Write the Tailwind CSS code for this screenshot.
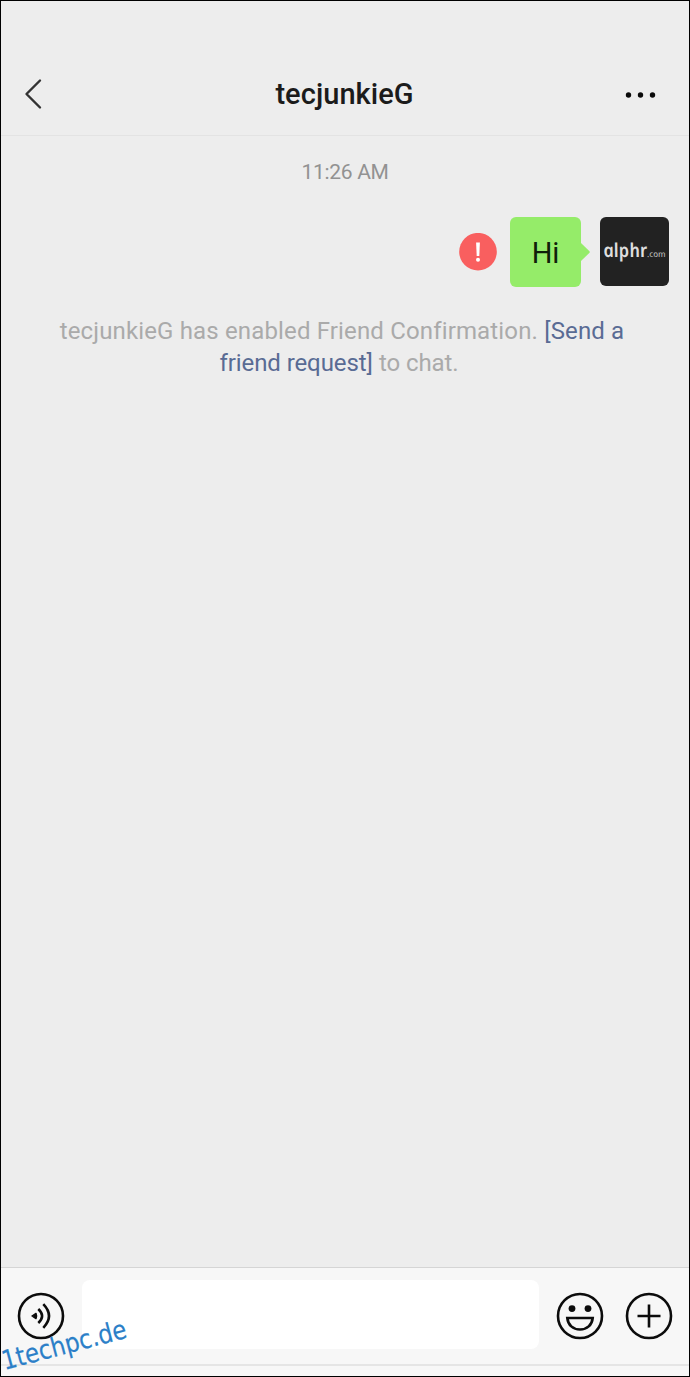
<!DOCTYPE html>
<html lang="en">
<head>
  <meta charset="UTF-8" />
  <meta name="viewport" content="width=device-width, initial-scale=1.0" />
  <title>tecjunkieG</title>
  <script src="https://cdn.jsdelivr.net/npm/@tailwindcss/browser@4"></script>
</head>
<body class="bg-[#ededed] font-['Roboto',sans-serif]">
  <div class="relative flex h-[1377px] w-[690px] flex-col border border-black bg-[#ededed]">

    <!-- Header -->
    <header class="flex h-[135px] shrink-0 items-end justify-between border-b border-[#e3e3e3] pr-[31px] pb-[23px] pl-[22px]">
      <svg class="h-9 w-10" viewBox="0 0 40 36" fill="none" stroke="#333" stroke-width="2.4" stroke-linecap="round" stroke-linejoin="round">
        <path d="M17 4.5 3.5 18 17 31.5" />
      </svg>
      <h1 class="ml-2 text-[29px] leading-9 font-medium tracking-[0.05px] text-[#1b1b1b]">tecjunkieG</h1>
      <svg class="h-9 w-10" viewBox="0 0 40 36" fill="#0a0a0a">
        <circle cx="10.5" cy="19" r="2.7" />
        <circle cx="22.5" cy="19" r="2.7" />
        <circle cx="34.5" cy="19" r="2.7" />
      </svg>
    </header>

    <!-- Messages -->
    <main class="flex-1">
      <p class="mt-[22px] text-center text-[21px] leading-7 tracking-[-0.3px] text-[#929292]">11:26 AM</p>

      <div class="mt-[31px] flex items-center justify-end pr-5">
        <svg class="mr-[13px] size-[38px]" viewBox="0 0 38 38">
          <circle cx="19" cy="18.7" r="18.8" fill="#f95f5f" />
          <path d="M17.1 9.5h3.8l-.6 13.5h-2.6z" fill="#fff" />
          <circle cx="19" cy="26.8" r="2" fill="#fff" />
        </svg>
        <div class="flex h-[70px] w-[71px] items-center justify-center rounded-md bg-[#95ec69] pt-0.5 text-[29px] leading-none text-[#10200a]">Hi</div>
        <svg class="mr-[10px] h-[18px] w-[9px]" viewBox="0 0 9 18"><path d="M0 0 8.5 8.2Q9 9 8.5 9.8L0 18z" fill="#95ec69" /></svg>
        <svg class="mb-px h-[69px] w-[69px] rounded-md bg-[#222]" viewBox="0 0 69 69" fill="#dedede">
          <!-- italic face slanted back upright for the single-storey a -->
          <text transform="translate(4.4 40) skewX(12)" font-family="Noto Sans, sans-serif" font-style="italic" font-weight="600" font-size="19" textLength="44" lengthAdjust="spacingAndGlyphs">alphr</text>
          <text transform="translate(47.6 40) skewX(12)" font-family="Noto Sans, sans-serif" font-style="italic" font-size="8.5" textLength="18.5" lengthAdjust="spacingAndGlyphs" fill="#c4c4c4">.com</text>
        </svg>
      </div>

      <p class="mt-[28px] pr-[6px] text-center text-2xl leading-8 tracking-[0.15px] text-[#aaa]">
        tecjunkieG has enabled Friend Confirmation. <span class="text-[#596b94]">[Send a<br /><span class="tracking-[-0.08px]">friend request]</span></span> <span class="pr-[6px] tracking-[-0.08px]">to chat.</span>
      </p>
    </main>

    <!-- Input bar -->
    <footer class="h-[109px] shrink-0 border-t border-[#d5d5d5] bg-[#f7f7f7]">
      <div class="flex h-[98px] items-center border-b-2 border-[#e5e5e5] pl-4">
        <svg class="mb-px size-12" viewBox="0 0 48 48" fill="none" stroke="#0c0c0c" stroke-width="2.6">
          <circle cx="24" cy="24" r="22" />
          <path d="M15 24l4-2.6q1.2 2.6 0 5.2z" fill="#0c0c0c" stroke="#0c0c0c" stroke-width="1.4" stroke-linejoin="round" />
          <path d="M21.3 17q7.6 7 0 14M26.3 12.2q11.4 11.8 0 23.6" />
        </svg>
        <div class="mb-[3px] ml-[17px] h-[69px] w-[457px] rounded-lg bg-white"></div>
        <svg class="mb-px ml-[17px] size-12" viewBox="0 0 48 48" fill="none" stroke="#0c0c0c" stroke-width="2.6">
          <circle cx="24" cy="24" r="22" />
          <circle cx="16" cy="16.6" r="3.4" fill="#0c0c0c" stroke="none" />
          <circle cx="32" cy="16.6" r="3.4" fill="#0c0c0c" stroke="none" />
          <path d="M11.3 26h25.4C36 33 31 37.5 24 37.5S12 33 11.3 26z" />
        </svg>
        <svg class="mb-px ml-[21px] size-12" viewBox="0 0 48 48" fill="none" stroke="#0c0c0c" stroke-width="2.6">
          <circle cx="24" cy="24" r="22" />
          <path d="M12.5 24h23M24 12.5v23" />
        </svg>
      </div>
    </footer>

    <!-- Watermark -->
    <svg class="absolute bottom-0 left-0 h-[70px] w-[140px]" viewBox="0 0 140 70" fill="#2b7fc8" stroke="#2b7fc8" stroke-width="0.2">
      <text transform="translate(3.5 64) rotate(-14.8)" font-family="DejaVu Sans, sans-serif" font-size="26.5" textLength="128" lengthAdjust="spacingAndGlyphs">1techpc.de</text>
    </svg>
  </div>
</body>
</html>
